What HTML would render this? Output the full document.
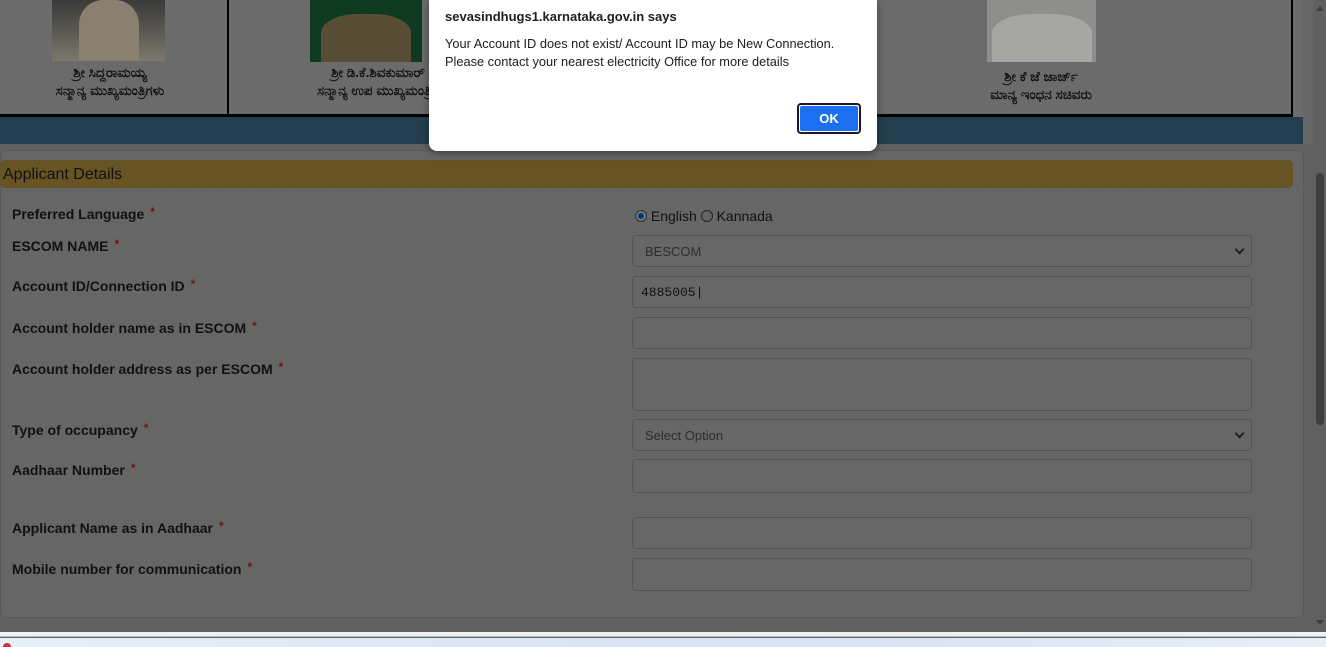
<!DOCTYPE html>
<html><head><meta charset="utf-8"><style>
*{box-sizing:border-box;margin:0;padding:0}
body{width:1326px;height:647px;overflow:hidden;background:#666;font-family:"Liberation Sans",Arial,sans-serif;position:relative}
.abs{position:absolute}
.top{left:0;top:0;width:1303px;height:117px;background:#6b6b6b}
.blue{left:0;top:117px;width:1303px;height:27px;background:#233f4f}
.photo{position:absolute;top:0}
.cap{position:absolute;font:bold 13.5px "Liberation Sans","Noto Sans CJK KR",sans-serif;color:#111;text-align:center;line-height:18px}
.lbl{position:absolute;left:12px;font-weight:bold;font-size:14px;color:#111}
.lbl i{font-style:normal;color:#6e1414;font-size:12px;position:relative;top:-3px;margin-left:6px}
.inp{position:absolute;left:632px;width:620px;height:32px;border:1px solid #555;border-radius:4px;background:#676767;font-size:13px;color:#2e2e2e;padding:8px 12px}
.chev{position:absolute;right:8px;top:10px;width:7px;height:7px;border-right:2px solid #222;border-bottom:2px solid #222;transform:rotate(45deg)}
.dlg{left:429px;top:0;width:448px;height:151px;background:#fff;border-radius:0 0 8px 8px;box-shadow:0 2px 8px rgba(0,0,0,.4)}
</style></head><body>
<div class="abs top"></div>
<div class="abs" style="left:0;top:114px;width:1293px;height:3px;background:#000"></div>
<div class="abs" style="left:227px;top:0;width:2px;height:116px;background:#000"></div>
<div class="abs" style="left:1291px;top:0;width:2px;height:117px;background:#000"></div>
<div class="photo" style="left:52px;width:113px;height:61px;background:linear-gradient(#3a3a3a,#5a5852 50%,#7c786a)"><div style="margin:0 auto;width:60px;height:61px;background:#8a8070;border-radius:40% 40% 0 0"></div></div>
<div class="photo" style="left:310px;width:112px;height:62px;background:#0f3a22"><div style="margin:14px auto 0;width:90px;height:48px;background:#5a4d36;border-radius:40% 40% 0 0"></div></div>
<div class="photo" style="left:987px;width:109px;height:62px;background:#8e8e8c"><div style="margin:14px auto 0;width:100px;height:48px;background:#a6a6a4;border-radius:40% 40% 0 0"></div></div>
<div class="cap" style="left:10px;top:64px;width:200px">ಶ್ರೀ ಸಿದ್ದರಾಮಯ್ಯ<br>ಸನ್ಮಾನ್ಯ ಮುಖ್ಯಮಂತ್ರಿಗಳು</div>
<div class="cap" style="left:278px;top:64px;width:200px;white-space:nowrap">ಶ್ರೀ ಡಿ.ಕೆ.ಶಿವಕುಮಾರ್<br>ಸನ್ಮಾನ್ಯ ಉಪ ಮುಖ್ಯಮಂತ್ರಿಗ</div>
<div class="cap" style="left:941px;top:68px;width:200px">ಶ್ರೀ ಕೆ ಜೆ ಜಾರ್ಜ್<br>ಮಾನ್ಯ ಇಂಧನ ಸಚಿವರು</div>
<div class="abs blue"></div>
<div class="abs" style="left:0;top:144px;width:1313px;height:488px;background:#606060"></div>
<div class="abs" style="left:0;top:150px;width:1304px;height:468px;background:#666;border:1px solid #5a5a5a;border-radius:4px"></div>
<div class="abs" style="left:0;top:160px;width:1293px;height:28px;background:#665424;border-radius:5px;font-size:16px;color:#111;padding:6px 3px">Applicant Details</div>
<div class="abs" style="left:0;top:190px;width:1300px;border-top:1px dashed #5f5f5f"></div>
<div class="lbl" style="top:206px">Preferred Language<i>*</i></div>
<div class="abs" style="left:635px;top:208px;font-size:14px;color:#111"><span style="display:inline-block;width:12px;height:12px;border-radius:50%;border:1px solid #333;background:radial-gradient(#0d3565 40%,#8aa 50%,#666 60%);vertical-align:-1px"></span> English <span style="display:inline-block;width:12px;height:12px;border-radius:50%;border:1px solid #222;vertical-align:-1px"></span> Kannada</div>
<div class="lbl" style="top:238px">ESCOM NAME<i>*</i></div>
<div class="inp" style="top:235px">BESCOM<span class="chev"></span></div>
<div class="lbl" style="top:278px">Account ID/Connection ID<i>*</i></div>
<div class="inp" style="top:276px;color:#111;font-family:'Liberation Mono',monospace;font-size:13px;padding-left:8px">4885005|</div>
<div class="lbl" style="top:320px">Account holder name as in ESCOM<i>*</i></div>
<div class="inp" style="top:317px"></div>
<div class="lbl" style="top:361px">Account holder address as per ESCOM<i>*</i></div>
<div class="inp" style="top:358px;height:53px"></div>
<div class="lbl" style="top:422px">Type of occupancy<i>*</i></div>
<div class="inp" style="top:419px">Select Option<span class="chev"></span></div>
<div class="lbl" style="top:462px">Aadhaar Number<i>*</i></div>
<div class="inp" style="top:459px;height:34px"></div>
<div class="lbl" style="top:520px">Applicant Name as in Aadhaar<i>*</i></div>
<div class="inp" style="top:517px"></div>
<div class="lbl" style="top:561px">Mobile number for communication<i>*</i></div>
<div class="inp" style="top:558px;height:33px"></div>
<div class="abs" style="left:1313px;top:0;width:13px;height:632px;background:#606060"></div>
<div class="abs" style="left:1316px;top:173px;width:8px;height:252px;background:#3e3e3e;border-radius:4px"></div>
<div class="abs" style="left:1316px;top:2px;width:0;height:0;border:4px solid transparent;border-bottom:5px solid #3e3e3e"></div>
<div class="abs" style="left:1316px;top:620px;width:0;height:0;border:4px solid transparent;border-top:5px solid #3e3e3e"></div>
<div class="abs" style="left:0;top:632px;width:1326px;height:5px;background:#f0f0f0;border-bottom:1px solid #bbb"></div>
<div class="abs" style="left:0;top:638px;width:1326px;height:9px;background:linear-gradient(90deg,#e6eef8,#d6e2f6 60%,#e8eef8)"></div>
<div class="abs" style="left:3px;top:643px;width:8px;height:4px;background:#c33;border-radius:4px 4px 0 0"></div>
<div class="abs dlg">
<div style="position:absolute;left:16px;top:9px;font-weight:bold;font-size:13px;color:#202020">sevasindhugs1.karnataka.gov.in says</div>
<div style="position:absolute;left:16px;top:35px;font-size:12.8px;color:#202020;line-height:18px">Your Account ID does not exist/ Account ID may be New Connection.<br>Please contact your nearest electricity Office for more details</div>
<div style="position:absolute;left:368px;top:103px;width:64px;height:31px;border:2px solid #1a1a2e;border-radius:4px;padding:1px"><div style="width:100%;height:100%;background:#1b6ff0;border-radius:2px;color:#fff;font-weight:bold;font-size:13px;text-align:center;line-height:25px">OK</div></div>
</div>
</body></html>
